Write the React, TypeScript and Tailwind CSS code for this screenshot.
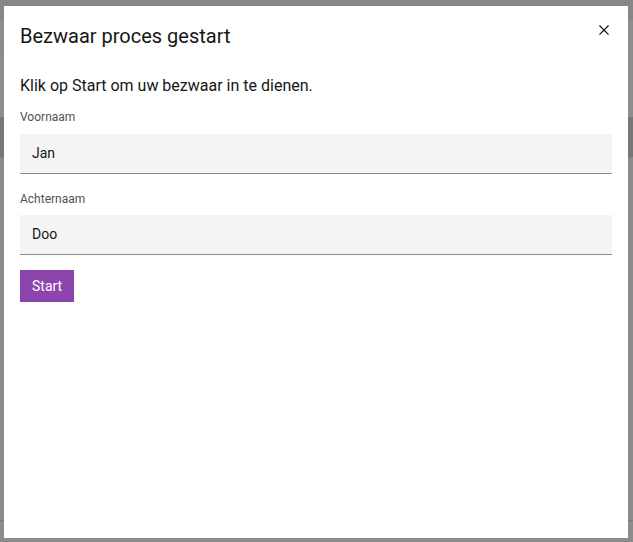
import React from "react";

export default function App() {
  const font = { fontFamily: 'Roboto, "Noto Sans", sans-serif' };
  return (
    <div className="relative w-[633px] h-[542px] overflow-hidden bg-[#8b8b8b]" style={font}>
      {/* page behind the overlay */}
      <div className="flex flex-col h-full">
        <div className="h-[20px] bg-[#878787]" />
        <div className="h-[97px] bg-[#8d8d8d] text-[#5a5a5a] text-[16px] pt-[16px] -ml-[8px]">e</div>
        <div className="h-[40px] bg-[#777777]" />
        <div className="h-[364px] bg-[#8b8b8b] border-b border-[#7c7c7c]" />
        <div className="flex-1 bg-[#8b8b8b]" />
      </div>

      {/* modal */}
      <div className="absolute left-[4px] top-[6px] w-[624px] h-[532px] bg-white flex flex-col">
        <div className="pl-[16px] pr-[48px] pt-[16px]">
          <h2 className="text-[20px] leading-[28px] text-[#161616]">Bezwaar proces gestart</h2>
        </div>
        <button className="absolute right-[14px] top-[14px] w-[20px] h-[20px] flex items-center justify-center text-[#161616]">
          <svg width="20" height="20" viewBox="0 0 32 32" fill="currentColor">
            <path d="M24 9.4L22.6 8 16 14.6 9.4 8 8 9.4 14.6 16 8 22.6 9.4 24 16 17.4 22.6 24 24 22.6 17.4 16 24 9.4z" />
          </svg>
        </button>
        <div className="px-[16px] pt-[25px] flex flex-col">
          <p className="text-[16px] leading-[22px] text-[#161616]">Klik op Start om uw bezwaar in te dienen.</p>
          <label className="mt-[12px] text-[12px] leading-[16px] text-[#525252]">Voornaam</label>
          <div className="mt-[9px] h-[40px] bg-[#f4f4f4] border-b border-[#8d8d8d] flex items-center px-[12px] text-[14px] text-[#161616] w-[592px]">
            Jan
          </div>
          <label className="mt-[17px] text-[12px] leading-[16px] text-[#525252]">Achternaam</label>
          <div className="mt-[8px] h-[40px] bg-[#f4f4f4] border-b border-[#8d8d8d] flex items-center px-[12px] text-[14px] text-[#161616] w-[592px]">
            Doo
          </div>
          <div className="mt-[15px]">
            <button className="h-[32px] px-[12px] bg-[#8e44ad] text-white text-[14px] leading-[18px]">Start</button>
          </div>
        </div>
      </div>
    </div>
  );
}
